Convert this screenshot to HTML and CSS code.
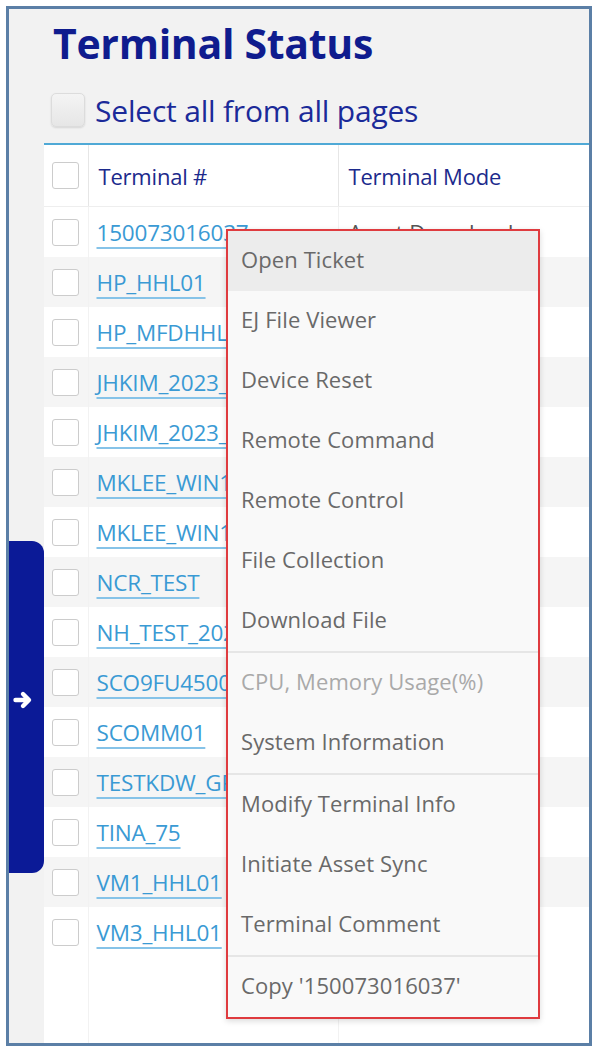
FILE: index.html
```html
<!DOCTYPE html>
<html lang="en">

<head>
    <meta charset="UTF-8">
    <meta name="viewport" content="width=device-width, initial-scale=1.0">
    <title>Terminal Status</title>
    <link rel="stylesheet" href="styles.css">
</head>

<body>
    <div class="frame">
        <h1 class="title">Terminal Status</h1>
        <label class="select-all">
            <span class="big-check"></span>
            <span>Select all from all pages</span>
        </label>

        <table class="grid">
            <thead>
                <tr>
                    <th class="col-check"><span class="check"></span></th>
                    <th class="col-id">Terminal #</th>
                    <th>Terminal Mode</th>
                </tr>
            </thead>
            <tbody>
                <tr><td class="col-check"><span class="check"></span></td><td class="col-id"><a href="#">150073016037</a></td><td class="mode">Asset Download</td></tr>
                <tr><td class="col-check"><span class="check"></span></td><td class="col-id"><a href="#">HP_HHL01</a></td><td></td></tr>
                <tr><td class="col-check"><span class="check"></span></td><td class="col-id"><a href="#">HP_MFDHHL01</a></td><td></td></tr>
                <tr><td class="col-check"><span class="check"></span></td><td class="col-id"><a href="#">JHKIM_2023_01</a></td><td></td></tr>
                <tr><td class="col-check"><span class="check"></span></td><td class="col-id"><a href="#">JHKIM_2023_02</a></td><td></td></tr>
                <tr><td class="col-check"><span class="check"></span></td><td class="col-id"><a href="#">MKLEE_WIN10</a></td><td></td></tr>
                <tr><td class="col-check"><span class="check"></span></td><td class="col-id"><a href="#">MKLEE_WIN11</a></td><td></td></tr>
                <tr><td class="col-check"><span class="check"></span></td><td class="col-id"><a href="#">NCR_TEST</a></td><td></td></tr>
                <tr><td class="col-check"><span class="check"></span></td><td class="col-id"><a href="#">NH_TEST_2023</a></td><td></td></tr>
                <tr><td class="col-check"><span class="check"></span></td><td class="col-id"><a href="#">SCO9FU4500</a></td><td></td></tr>
                <tr><td class="col-check"><span class="check"></span></td><td class="col-id"><a href="#">SCOMM01</a></td><td></td></tr>
                <tr><td class="col-check"><span class="check"></span></td><td class="col-id"><a href="#">TESTKDW_GRG</a></td><td></td></tr>
                <tr><td class="col-check"><span class="check"></span></td><td class="col-id"><a href="#">TINA_75</a></td><td></td></tr>
                <tr><td class="col-check"><span class="check"></span></td><td class="col-id"><a href="#">VM1_HHL01</a></td><td></td></tr>
                <tr><td class="col-check"><span class="check"></span></td><td class="col-id"><a href="#">VM3_HHL01</a></td><td></td></tr>
                <tr class="filler"><td class="col-check"></td><td class="col-id"></td><td></td></tr>
            </tbody>
        </table>

        <div class="side-tab">
            <svg width="20" height="20" viewBox="0 0 20 20">
                <path d="M2.5 10h12.5M10 4l6 6-6 6" fill="none" stroke="#fff" stroke-width="4.4" stroke-linecap="round" stroke-linejoin="round" />
            </svg>
        </div>

        <ul class="menu">
            <li class="active">Open Ticket</li>
            <li>EJ File Viewer</li>
            <li>Device Reset</li>
            <li>Remote Command</li>
            <li>Remote Control</li>
            <li>File Collection</li>
            <li>Download File</li>
            <li class="sep"></li>
            <li class="disabled">CPU, Memory Usage(%)</li>
            <li>System Information</li>
            <li class="sep"></li>
            <li>Modify Terminal Info</li>
            <li>Initiate Asset Sync</li>
            <li>Terminal Comment</li>
            <li class="sep"></li>
            <li>Copy '150073016037'</li>
        </ul>
    </div>
</body>

</html>
```

FILE: styles.css
```css
html,
body {
    margin: 0;
    background: #ffffff;
    font-family: "Open Sans", "Noto Sans", sans-serif;
}

.frame {
    position: relative;
    margin: 6px;
    height: 1040px;
    border: 3px solid #5b7fa6;
    background: #f2f2f2;
    overflow: hidden;
    box-sizing: border-box;
}

.title {
    margin: 0;
    padding: 10px 0 0 44px;
    height: 77px;
    box-sizing: border-box;
    font-size: 41px;
    font-weight: 700;
    line-height: 48px;
    color: #0f1c8e;
    letter-spacing: -0.3px;
}

.select-all {
    display: flex;
    align-items: center;
    gap: 10px;
    padding-left: 42px;
    height: 48px;
    font-size: 30px;
    color: #1b2a99;
    letter-spacing: -0.2px;
}

.big-check {
    width: 34px;
    height: 34px;
    border-radius: 5px;
    border: 1px solid #dcdcdc;
    background: linear-gradient(#f4f4f4, #e6e6e6);
    box-shadow: 0 1px 2px rgba(0, 0, 0, 0.12);
    box-sizing: border-box;
}

.grid {
    margin: 9px 0 0 35px;
    width: 546px;
    border-collapse: collapse;
    border-top: 2px solid #4fa9d6;
    background: #ffffff;
}

.grid th,
.grid td {
    padding: 0;
    text-align: left;
    white-space: nowrap;
    overflow: hidden;
}

.grid th {
    height: 61px;
    font-size: 22px;
    font-weight: 500;
    color: #1c2a8c;
    border-left: 1px solid #e6e6e6;
    padding-left: 10px;
    border-bottom: 1px solid #eeeeee;
    letter-spacing: -0.2px;
}

.grid th.col-check,
.grid td.col-check {
    width: 44px;
    padding-left: 8px;
    box-sizing: border-box;
    border-left: none;
}

.grid .col-id {
    width: 250px;
    max-width: 250px;
    box-sizing: border-box;
}

.grid td {
    height: 50px;
    border-left: 1px solid #f2f2f2;
}

.grid td.col-id {
    padding-left: 8px;
}

.grid td.mode {
    padding-left: 10px;
    font-size: 22px;
    color: #555555;
}

.grid tbody tr:nth-child(even) {
    background: #f5f5f5;
}

.grid tbody tr.filler td {
    height: 100px;
    background: #ffffff;
}

.check {
    display: block;
    width: 27px;
    height: 27px;
    border: 1px solid #cccccc;
    border-radius: 3px;
    background: #ffffff;
    box-sizing: border-box;
}

.grid a {
    font-size: 22.5px;
    color: #3a9ad4;
    text-decoration: underline;
    text-decoration-color: #86c3e8;
    text-decoration-thickness: 2px;
    text-underline-offset: 6px;
    letter-spacing: -0.2px;
}

.side-tab {
    position: absolute;
    left: -1px;
    top: 532px;
    width: 36px;
    height: 332px;
    padding: 149px 0 0 5px;
    box-sizing: border-box;
    background: #0b1a97;
    border-radius: 0 12px 12px 0;
}

.side-tab svg {
    display: block;
}

.menu {
    position: absolute;
    left: 217px;
    top: 220px;
    width: 310px;
    margin: 0;
    padding: 0;
    list-style: none;
    background: #f9f9f9;
    border: 2px solid #df3b3f;
    box-shadow: 0 2px 6px rgba(0, 0, 0, 0.15);
}

.menu li {
    height: 60px;
    line-height: 56px;
    padding-left: 13px;
    font-size: 22px;
    color: #696969;
    letter-spacing: 0.1px;
}

.menu li.active {
    background: #ececec;
}

.menu li.disabled {
    color: #a9a9a9;
}

.menu li.sep {
    height: 0;
    border-top: 2px solid #e6e6e6;
}
```
